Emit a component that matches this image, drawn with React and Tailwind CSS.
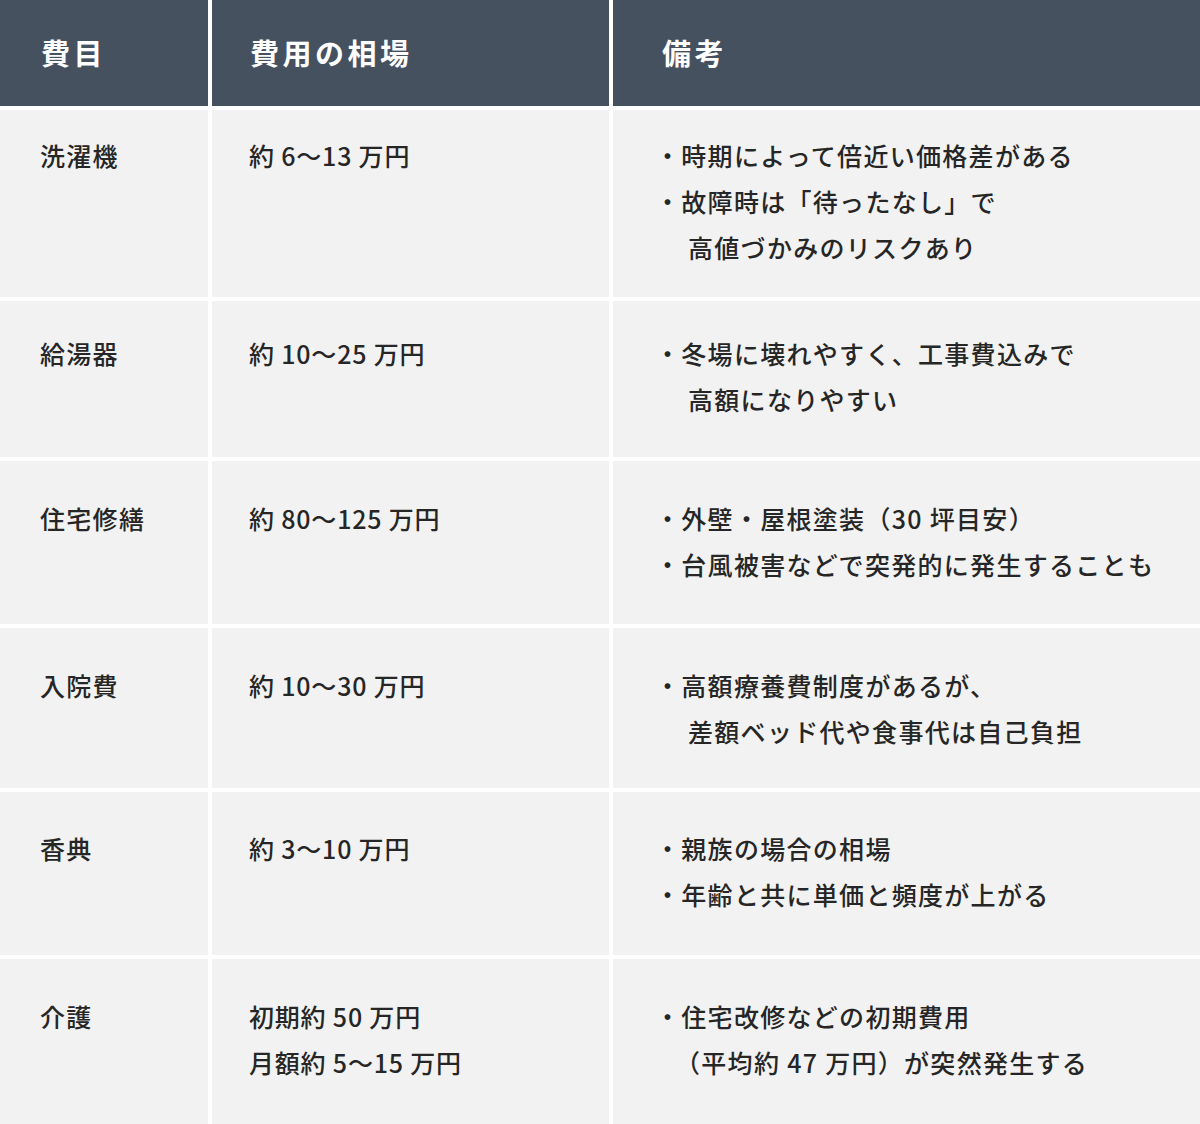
import React from "react";

const rows = [
  {
    pt: "pt-[22px]",
    item: "洗濯機",
    cost: ["約 6〜13 万円"],
    notes: [
      { b: true, t: "時期によって倍近い価格差がある" },
      { b: true, t: "故障時は「待ったなし」で" },
      { b: false, t: "高値づかみのリスクあり" },
    ],
  },
  {
    pt: "pt-[29px]",
    item: "給湯器",
    cost: ["約 10〜25 万円"],
    notes: [
      { b: true, t: "冬場に壊れやすく、工事費込みで" },
      { b: false, t: "高額になりやすい" },
    ],
  },
  {
    pt: "pt-[34px]",
    item: "住宅修繕",
    cost: ["約 80〜125 万円"],
    notes: [
      { b: true, t: "外壁・屋根塗装（30 坪目安）" },
      { b: true, t: "台風被害などで突発的に発生することも" },
    ],
  },
  {
    pt: "pt-[34px]",
    item: "入院費",
    cost: ["約 10〜30 万円"],
    notes: [
      { b: true, t: "高額療養費制度があるが、" },
      { b: false, t: "差額ベッド代や食事代は自己負担" },
    ],
  },
  {
    pt: "pt-[33px]",
    item: "香典",
    cost: ["約 3〜10 万円"],
    notes: [
      { b: true, t: "親族の場合の相場" },
      { b: true, t: "年齢と共に単価と頻度が上がる" },
    ],
  },
  {
    pt: "pt-[34px]",
    item: "介護",
    cost: ["初期約 50 万円", "月額約 5〜15 万円"],
    notes: [
      { b: true, t: "住宅改修などの初期費用" },
      { b: false, t: "（平均約 47 万円）が突然発生する", paren: true },
    ],
  },
];

const font = {
  fontFamily: '"Noto Sans CJK JP", "Noto Sans", sans-serif',
};

export default function App() {
  return (
    <div
      className="w-[1200px] h-[1124px] bg-white overflow-hidden"
      style={font}
    >
      <div className="grid grid-cols-[208px_397px_1fr] grid-rows-[106px_187px_156px_163px_160px_163px_165px] gap-[4px]">
        <div className="bg-[#465160] text-white font-bold text-[29px] tracking-[3.5px] flex items-center pl-[41px]">
          費目
        </div>
        <div className="bg-[#465160] text-white font-bold text-[29px] tracking-[3.5px] flex items-center pl-[38px]">
          費用の相場
        </div>
        <div className="bg-[#465160] text-white font-bold text-[29px] tracking-[3.5px] flex items-center pl-[49px]">
          備考
        </div>
        {rows.map((r, i) => (
          <React.Fragment key={i}>
            <div
              className={`bg-[#f2f2f2] text-[#262626] font-medium text-[25px] leading-[46px] tracking-[1.3px] pl-[40px] ${r.pt}`}
            >
              {r.item}
            </div>
            <div
              className={`bg-[#f2f2f2] text-[#262626] font-medium text-[25px] leading-[46px] tracking-[0.8px] pl-[37px] ${r.pt}`}
            >
              {r.cost.map((c, j) => (
                <div key={j} className="whitespace-nowrap">
                  {c}
                </div>
              ))}
            </div>
            <div
              className={`bg-[#f2f2f2] text-[#262626] font-medium text-[25px] leading-[46px] tracking-[1.3px] pl-[42px] ${r.pt}`}
            >
              {r.notes.map((n, j) => (
                <div
                  key={j}
                  className={`whitespace-nowrap ${
                    n.b ? "" : n.paren ? "pl-[20px]" : "pl-[33px]"
                  }`}
                >
                  {n.b ? "・" : ""}
                  {n.t}
                </div>
              ))}
            </div>
          </React.Fragment>
        ))}
      </div>
    </div>
  );
}
